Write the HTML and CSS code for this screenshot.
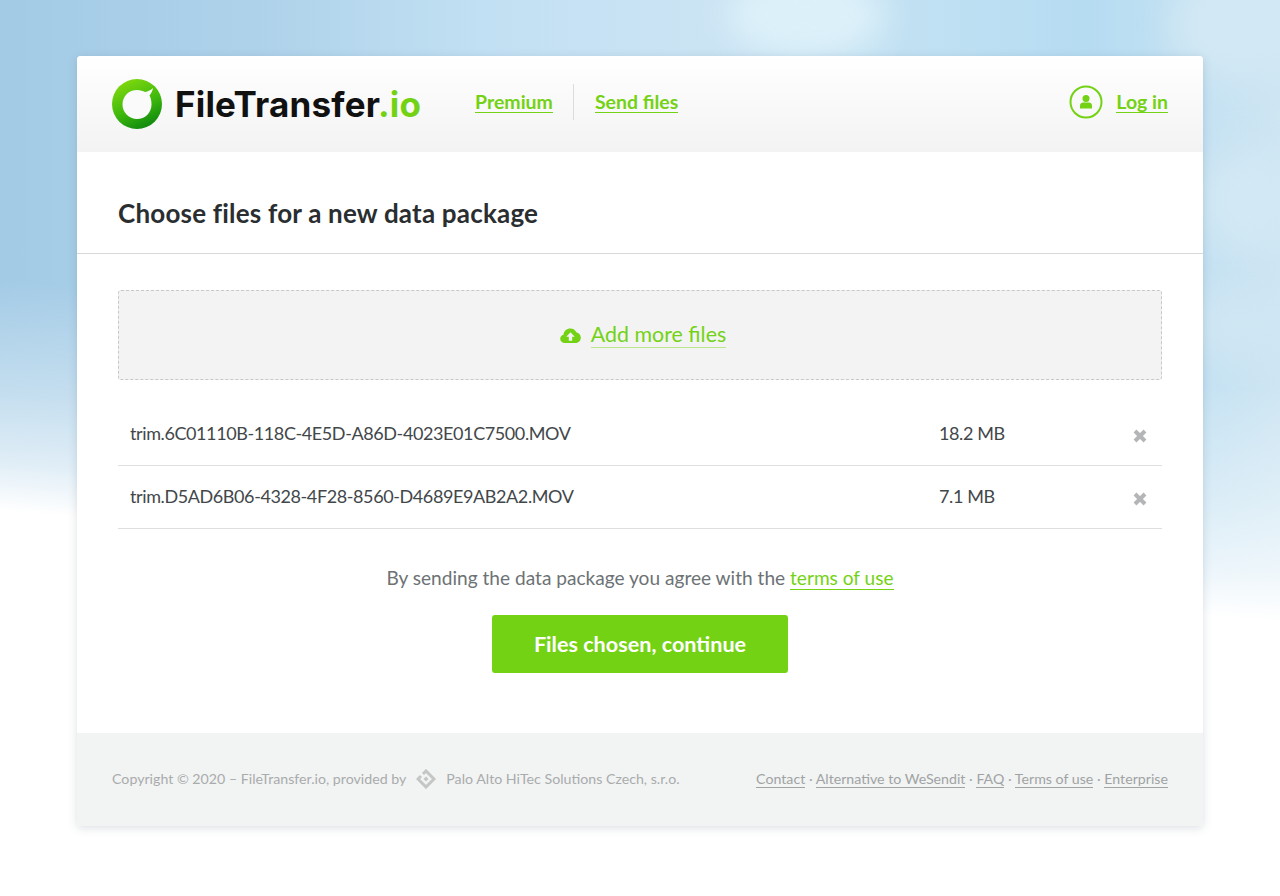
FILE: index.html
```html
<!DOCTYPE html>
<html lang="en">
<head>
    <meta charset="UTF-8">
    <title>FileTransfer.io</title>
    <link rel="stylesheet" href="styles.css">
</head>
<body>
    <div class="sky">
        <span class="cloud cloud-a"></span>
        <span class="cloud cloud-b"></span>
        <span class="cloud cloud-c"></span>
        <span class="cloud cloud-d"></span>
        <span class="haze"></span>
    </div>

    <div class="panel">
        <div class="header">
            <a href="#" class="logo">
                <svg class="logo-mark" width="50" height="50" viewBox="0 0 50 50">
                    <defs>
                        <linearGradient id="ring" x1="0.2" y1="0.05" x2="0.65" y2="1">
                            <stop offset="0" stop-color="#80d80e"/>
                            <stop offset="0.55" stop-color="#3fb90c"/>
                            <stop offset="1" stop-color="#0e880e"/>
                        </linearGradient>
                    </defs>
                    <circle cx="25" cy="25" r="25" fill="url(#ring)"/>
                    <path d="M25 11C28.500 11 31 12 33 13C36 12.500 39 11 41 9C40.500 12 39 15 37.500 16.500C39 19 39.500 22 39.500 25.500C39.500 34 33 40 25 40C17 40 10.500 33.500 10.500 25.500C10.500 17 17 11 25 11Z" fill="#fafafa"/>
                </svg>
                <span class="logo-text">FileTransfer<em>.io</em></span>
            </a>
            <ul class="nav">
                <li><a href="#">Premium</a></li>
                <li><a href="#">Send files</a></li>
            </ul>
            <div class="login">
                <svg width="34" height="34" viewBox="0 0 34 34">
                    <circle cx="17" cy="17" r="15.500" fill="none" stroke="#74d215" stroke-width="2"/>
                    <circle cx="17" cy="13.500" r="3.500" fill="#74d215"/>
                    <path d="M11 23.500V20.500C11 18.500 12.500 17.500 14 17.500H20C21.500 17.500 23 18.500 23 20.500V23.500Z" fill="#74d215"/>
                </svg>
                <a href="#">Log in</a>
            </div>
        </div>

        <h1 class="title">Choose files for a new data package</h1>

        <div class="content">
            <div class="dropzone">
                <svg width="21" height="15" viewBox="0 0 22 16">
                    <path d="M5 16C2.200 16 0 14 0 11.500C0 9.300 1.500 7.600 3.500 7.100C3.900 3.200 7 0.500 10.800 0.500C13.800 0.500 16.300 2.200 17.500 4.900C20 5.300 22 7.600 22 10.400C22 13.500 19.500 16 16.500 16Z" fill="#74d215"/>
                    <path d="M11 4.500L15.500 9.300H12.800V13.500H9.200V9.300H6.500Z" fill="#f3f3f3"/>
                </svg>
                <a href="#">Add more files</a>
            </div>

            <div class="file-row">
                <span class="file-name">trim.6C01110B-118C-4E5D-A86D-4023E01C7500.MOV</span>
                <span class="file-size">18.2 MB</span>
                <svg class="file-remove" width="14" height="14" viewBox="0 0 14 14">
                    <path d="M2 2L12 12M12 2L2 12" stroke="#b3b5b7" stroke-width="4"/>
                </svg>
            </div>
            <div class="file-row">
                <span class="file-name">trim.D5AD6B06-4328-4F28-8560-D4689E9AB2A2.MOV</span>
                <span class="file-size">7.1 MB</span>
                <svg class="file-remove" width="14" height="14" viewBox="0 0 14 14">
                    <path d="M2 2L12 12M12 2L2 12" stroke="#b3b5b7" stroke-width="4"/>
                </svg>
            </div>

            <p class="terms">By sending the data package you agree with the <a href="#">terms of use</a></p>
            <button class="cta-button">Files chosen, continue</button>
        </div>

        <div class="footer">
            <div class="copyright">
                <span>Copyright © 2020 – FileTransfer.io, provided by</span>
                <svg width="20" height="20" viewBox="0 0 20 20">
                    <path d="M7 5L10 2L18 10L10 18L2 10L5 7" fill="none" stroke="#c4c6c6" stroke-width="3"/>
                    <path d="M10 7.500L12.500 10L10 12.500L7.500 10Z" fill="#c4c6c6"/>
                </svg>
                <span>Palo Alto HiTec Solutions Czech, s.r.o.</span>
            </div>
            <div class="footer-links">
                <a href="#">Contact</a> · <a href="#">Alternative to WeSendit</a> · <a href="#">FAQ</a> · <a href="#">Terms of use</a> · <a href="#">Enterprise</a>
            </div>
        </div>
    </div>
</body>
</html>
```

FILE: styles.css
```css
html, body {
    margin: 0;
    height: 896px;
    overflow: hidden;
}

body {
    font-family: 'Lato', 'Noto Sans', sans-serif;
    color: #33383b;
    background: linear-gradient(90deg, #a3cbe6 0, #aed2ea 20%, #c2e0f3 38%, #cbe4f4 55%, #c4e2f3 68%, #b6dcf2 85%, #cfe6f3 100%);
    position: relative;
}

/* background picture, rebuilt from soft blobs */
.sky {
    position: absolute;
    inset: 0;
    overflow: hidden;
}

.cloud {
    position: absolute;
    border-radius: 50%;
    filter: blur(16px);
}
.cloud-a {
    left: 725px;
    top: -30px;
    width: 160px;
    height: 90px;
    background: #dcf0f9;
}
.cloud-b {
    left: 1170px;
    top: -30px;
    width: 140px;
    height: 110px;
    background: #d2e8f4;
}
.cloud-c {
    left: 1200px;
    top: 150px;
    width: 100px;
    height: 100px;
    background: #d2e8f4;
}
.cloud-d {
    left: 1190px;
    top: 290px;
    width: 110px;
    height: 70px;
    background: #cfe6f3;
}
.haze {
    position: absolute;
    inset: 0;
    background: linear-gradient(185deg, rgba(255,255,255,0) 390px, rgba(255,255,255,0.35) 500px, rgba(255,255,255,0.65) 570px, #fff 620px);
}

.panel {
    position: relative;
    width: 1126px;
    margin: 56px auto 0;
    background-color: white;
    border-radius: 4px;
    box-shadow: 0 2px 10px rgba(60,80,100,0.18);
    overflow: hidden;
}

.header {
    display: flex;
    align-items: center;
    height: 96px;
    padding: 0 35px;
    background: linear-gradient(180deg, #ffffff, #f3f3f3);
}

.logo {
    display: flex;
    align-items: center;
    gap: 13px;
    text-decoration: none;
    width: 310px;
    flex-shrink: 0;
}
.logo-text {
    font-family: 'Inter', sans-serif;
    font-size: 35px;
    font-weight: 700;
    letter-spacing: 0.2px;
    color: #111;
}
.logo-text em {
    font-style: normal;
    color: #74d215;
}

.nav {
    list-style-type: none;
    display: flex;
    align-items: center;
    margin: 0 0 4px 53px;
    padding: 0;
}
.nav li {
    height: 36px;
    display: flex;
    align-items: center;
    padding-right: 20px;
}
.nav li + li {
    border-left: 1px solid #dcdcdc;
    padding-left: 21px;
}
.nav a, .login a {
    font-size: 19.500px;
    font-weight: 700;
    color: #74d215;
    text-decoration: none;
    border-bottom: 1px solid #74d215;
    line-height: 21px;
}

.login {
    margin: 0 0 5px auto;
    display: flex;
    align-items: center;
    gap: 13px;
}

.title {
    margin: 0;
    padding: 43px 41px 22px;
    font-size: 26px;
    line-height: 36px;
    font-weight: 700;
    letter-spacing: 0.2px;
    color: #2a2e30;
    border-bottom: 1px solid #d8d8d8;
}

.content {
    padding: 36px 41px 60px;
    text-align: center;
}

.dropzone {
    display: flex;
    align-items: center;
    justify-content: center;
    gap: 10px;
    height: 88px;
    padding-left: 6px;
    margin-bottom: 23px;
    background-color: #f3f3f3;
    border: 1px dashed #c8c8c8;
    border-radius: 3px;
}
.dropzone a {
    font-size: 21.400px;
    color: #74d215;
    text-decoration: none;
    border-bottom: 1px solid #b9e88a;
    line-height: 25px;
}

.file-row {
    display: flex;
    align-items: center;
    height: 60px;
    padding: 0 15px 2px 12px;
    border-bottom: 1px solid #dedede;
    font-size: 18px;
    letter-spacing: -0.4px;
    color: #42474a;
    text-align: left;
}
.file-name {
    width: 809px;
    flex-shrink: 0;
}
.file-size {
    width: 194px;
    flex-shrink: 0;
}
.file-remove {
    flex-shrink: 0;
    margin-top: 5px;
}

.terms {
    margin: 36px 0 24px;
    font-size: 19.100px;
    line-height: 26px;
    color: #6d7275;
}
.terms a {
    color: #74d215;
    text-decoration: none;
    border-bottom: 1px solid #74d215;
}

.cta-button {
    display: block;
    width: 296px;
    height: 58px;
    margin: 0 auto;
    background-color: #74d215;
    color: white;
    border: none;
    border-radius: 3px;
    font-family: inherit;
    font-size: 21.600px;
    font-weight: 700;
}

.footer {
    display: flex;
    align-items: center;
    justify-content: space-between;
    height: 91px;
    padding: 0 35px 2px;
    background-color: #f2f3f3;
    font-size: 14.200px;
    color: #a9acac;
}
.copyright {
    display: flex;
    align-items: center;
    gap: 10px;
}
.footer-links a {
    color: #a0a3a3;
    text-decoration: none;
    border-bottom: 1px solid #a0a3a3;
}
```
